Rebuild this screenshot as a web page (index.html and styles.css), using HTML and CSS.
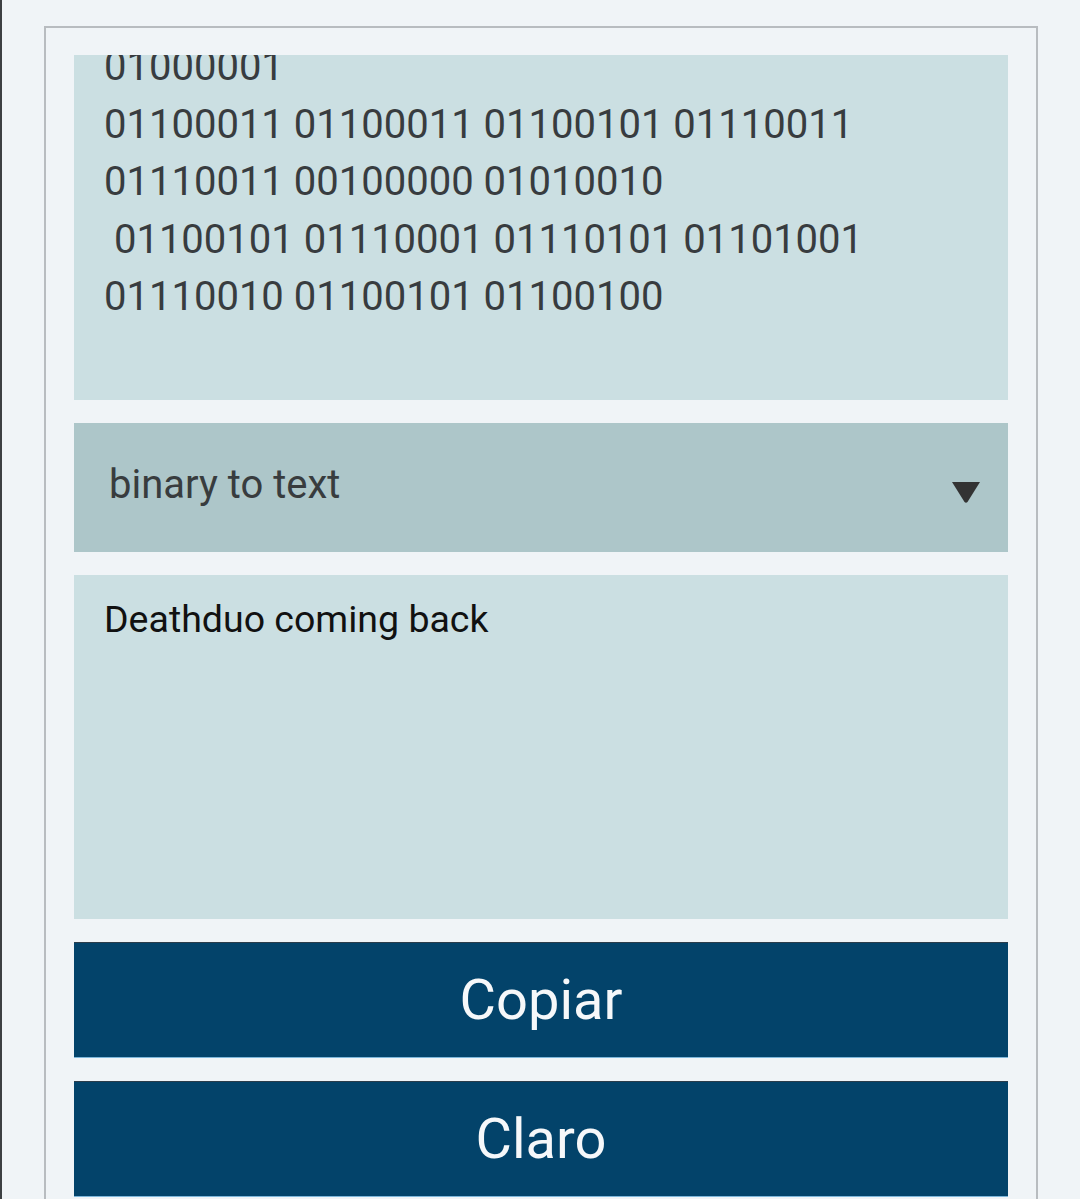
FILE: index.html
```html
<!DOCTYPE html>
<html lang="pt-BR">
<head>
  <meta charset="UTF-8">
  <meta name="viewport" content="width=device-width, initial-scale=1.0">
  <title>Conversor Binário</title>
  <link rel="stylesheet" href="styles.css">
</head>
<body>
  <div class="page">
    <div class="converter">
      <!-- Entrada -->
      <textarea id="inputText" class="box input-box" spellcheck="false">01000001
01100011 01100011 01100101 01110011 01110011 00100000 01010010
 01100101 01110001 01110101 01101001 01110010 01100101 01100100


</textarea>

      <!-- Modo de conversão -->
      <div class="select-wrap">
        <select id="mode" class="mode-select">
          <option>binary to text</option>
          <option>text to binary</option>
        </select>
        <svg class="select-arrow" width="28" height="21" viewBox="0 0 28 21">
          <path d="M0 0 H28 L15.5 20 Q14 21.5 12.5 20 Z" fill="#333"/>
        </svg>
      </div>

      <!-- Saída -->
      <textarea id="outputText" class="box output-box" spellcheck="false" readonly>Deathduo coming back</textarea>

      <button class="btn">Copiar</button>
      <button class="btn">Claro</button>
    </div>
  </div>

  <script>
    // mantém a entrada rolada como no celular
    document.getElementById("inputText").scrollTop = 47;
  </script>
</body>
</html>
```

FILE: styles.css
```css
* {
  margin: 0;
  padding: 0;
  box-sizing: border-box;
}

body {
  font-family: Roboto, 'Liberation Sans', sans-serif;
  background-color: #f0f4f7;
}

.page {
  min-height: 100vh;
  border-left: 2px solid #3d4043;
  padding: 26px 0 0 42px;
}

.converter {
  width: 994px;
  border: 2px solid #b8bcc0;
  border-bottom: none;
  padding: 27px 28px 28px;
  display: flex;
  flex-direction: column;
  gap: 23px;
}

.box {
  display: block;
  width: 100%;
  border: none;
  outline: none;
  resize: none;
  overflow: hidden;
  background-color: #cbdfe2;
  font-family: Roboto, sans-serif;
}

.input-box {
  height: 345px;
  padding: 30px;
  font-size: 40px;
  line-height: 57.5px;
  color: #383c3f;
}

.output-box {
  height: 344px;
  padding: 22px 30px;
  font-size: 37.5px;
  color: #111;
}

.select-wrap {
  position: relative;
}

.mode-select {
  -webkit-appearance: none;
  appearance: none;
  display: block;
  width: 100%;
  height: 129px;
  border: none;
  outline: none;
  border-radius: 0;
  padding: 0 80px 6px 35px;
  background-color: #adc6c9;
  font-family: Roboto, sans-serif;
  font-size: 40px;
  color: #383c3e;
}

.select-arrow {
  position: absolute;
  top: 59px;
  right: 28px;
  pointer-events: none;
}

.btn {
  display: block;
  width: 100%;
  height: 116px;
  border: none;
  border-top: 1px solid #2b3d4b;
  border-bottom: 1px solid #7db6da;
  background-color: #03436a;
  color: #f6f8fa;
  font-family: Roboto, sans-serif;
  font-size: 56px;
  cursor: pointer;
}
```
